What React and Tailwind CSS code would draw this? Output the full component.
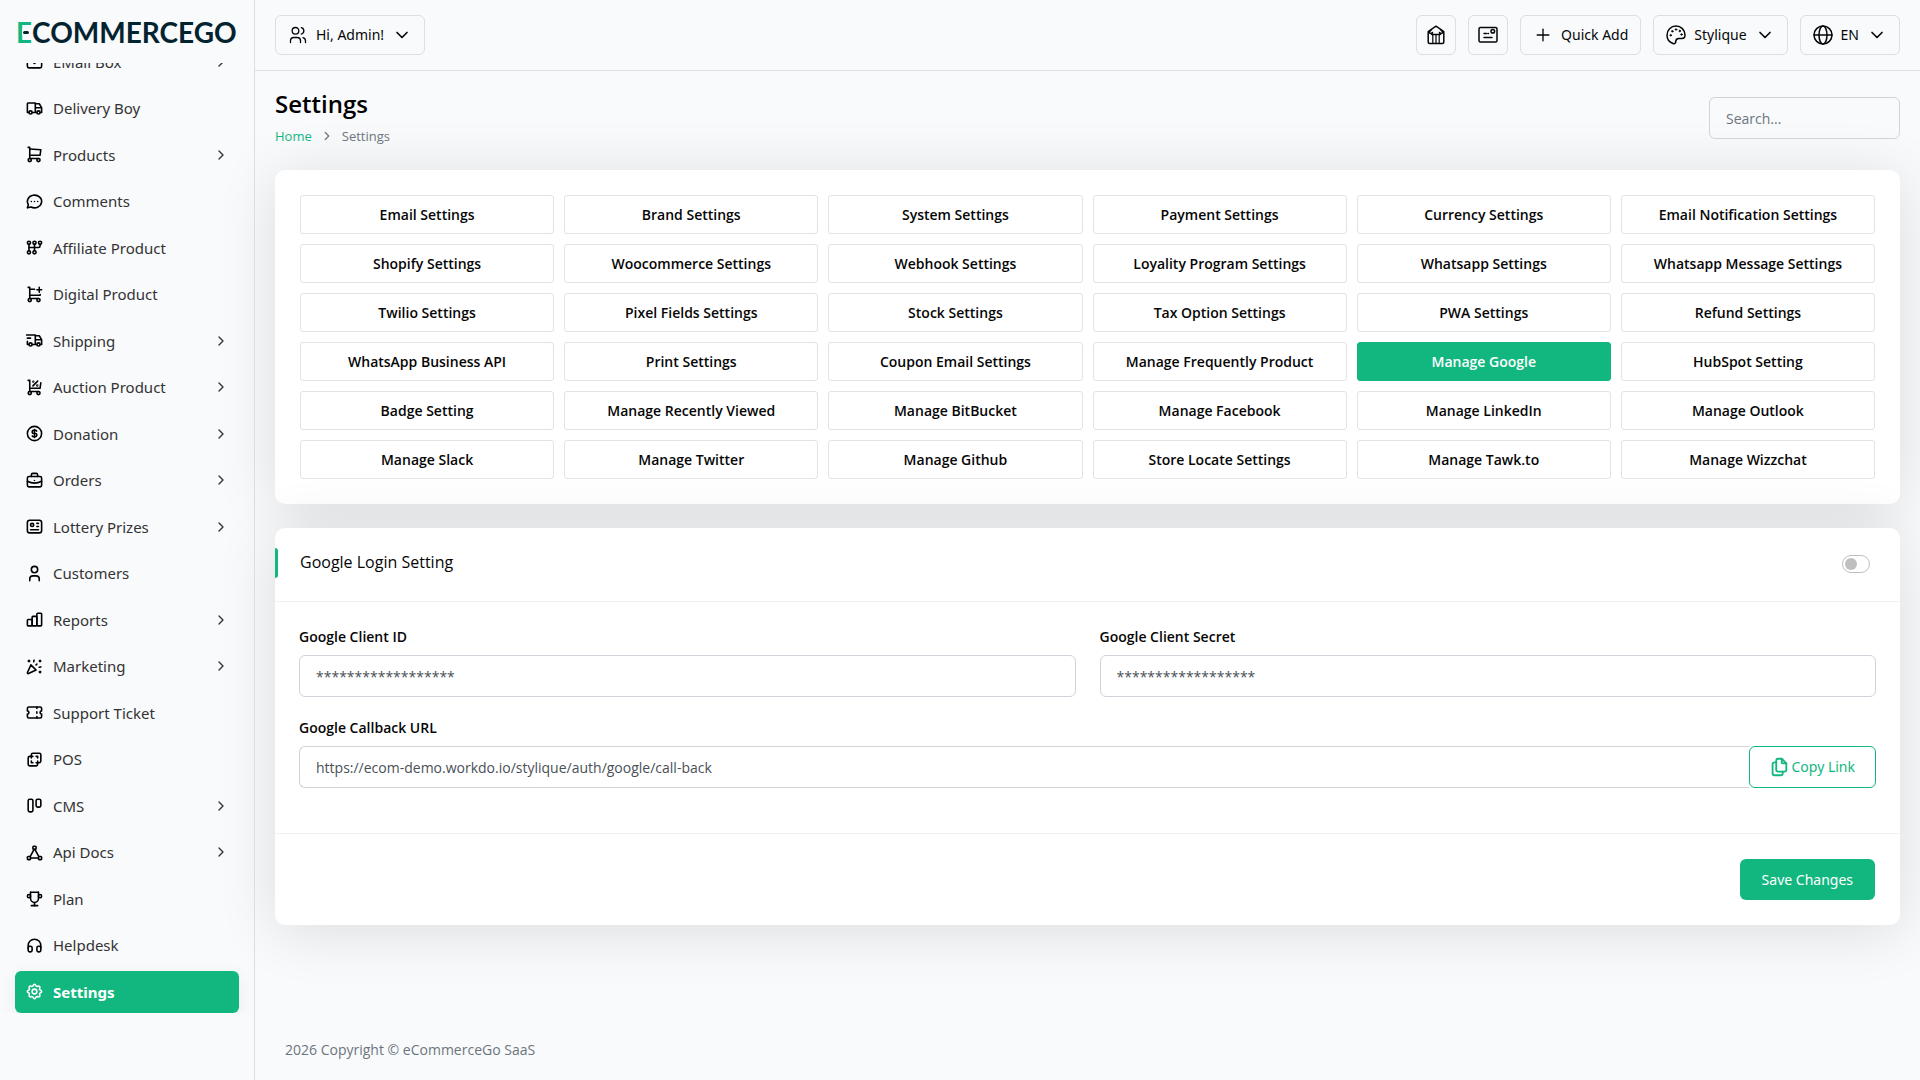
import { clsx } from 'clsx'
import {
  TbTruck,
  TbShoppingCart,
  TbManualGearbox,
  TbTruckDelivery,
  TbCoin,
  TbBriefcase,
  TbId,
  TbUser,
  TbConfetti,
  TbTicket,
  TbLayersDifference,
  TbVectorTriangle,
  TbTrophy,
  TbHeadphones,
  TbSettings,
  TbChevronRight,
  TbChevronDown,
  TbFiles,
  TbUsers,
  TbPlus
} from 'react-icons/tb'

/**
 * Line icon on a 24 unit grid, same look as the icon package
 */
const MenuGlyph = ({ children, size = 24, className }) => (
  <svg
    width={size}
    height={size}
    viewBox="0 0 24 24"
    fill="none"
    stroke="currentColor"
    strokeWidth="2"
    strokeLinecap="round"
    strokeLinejoin="round"
    aria-hidden="true"
    className={className}
  >
    {children}
  </svg>
)

const MailIcon = (props) => (
  <MenuGlyph {...props}>
    <rect x="3" y="5" width="18" height="15" rx="2" />
    <path d="M3 7l9 7.500L21 7" />
  </MenuGlyph>
)

const CommentIcon = (props) => (
  <MenuGlyph {...props}>
    <path d="M3 20l1.300-3.900a9 8 0 1 1 3.400 2.900L3 20M12 12v.010M8 12v.010M16 12v.010" />
  </MenuGlyph>
)

const CartPlusIcon = (props) => (
  <MenuGlyph {...props}>
    <circle cx="6" cy="19" r="2" />
    <circle cx="17" cy="19" r="2" />
    <path d="M17 17H6V3H4M6 5l6 .430M19.140 12l-.140 1H6M15 6h6M18 3v6" />
  </MenuGlyph>
)

const CartDiscountIcon = (props) => (
  <MenuGlyph {...props}>
    <circle cx="6" cy="19" r="2" />
    <circle cx="17" cy="19" r="2" />
    <path d="M17 17H6V3H4M20 6l-1 7H6M10 10l6-6" />
    <circle cx="10.500" cy="4.500" r=".5" />
    <circle cx="15.500" cy="9.500" r=".5" />
  </MenuGlyph>
)

const BarsIcon = (props) => (
  <MenuGlyph {...props}>
    <rect x="3" y="12" width="6" height="8" rx="1" />
    <rect x="9" y="8" width="6" height="12" rx="1" />
    <rect x="15" y="4" width="6" height="16" rx="1" />
  </MenuGlyph>
)

const BoardIcon = (props) => (
  <MenuGlyph {...props}>
    <rect x="4" y="4" width="6" height="16" rx="2" />
    <rect x="14" y="4" width="6" height="10" rx="2" />
  </MenuGlyph>
)

const menuItems = [
  { label: 'EMail Box', icon: MailIcon, hasChildren: true },
  { label: 'Delivery Boy', icon: TbTruck },
  { label: 'Products', icon: TbShoppingCart, hasChildren: true },
  { label: 'Comments', icon: CommentIcon },
  { label: 'Affiliate Product', icon: TbManualGearbox },
  { label: 'Digital Product', icon: CartPlusIcon },
  { label: 'Shipping', icon: TbTruckDelivery, hasChildren: true },
  { label: 'Auction Product', icon: CartDiscountIcon, hasChildren: true },
  { label: 'Donation', icon: TbCoin, hasChildren: true },
  { label: 'Orders', icon: TbBriefcase, hasChildren: true },
  { label: 'Lottery Prizes', icon: TbId, hasChildren: true },
  { label: 'Customers', icon: TbUser },
  { label: 'Reports', icon: BarsIcon, hasChildren: true },
  { label: 'Marketing', icon: TbConfetti, hasChildren: true },
  { label: 'Support Ticket', icon: TbTicket },
  { label: 'POS', icon: TbLayersDifference },
  { label: 'CMS', icon: BoardIcon, hasChildren: true },
  { label: 'Api Docs', icon: TbVectorTriangle, hasChildren: true },
  { label: 'Plan', icon: TbTrophy },
  { label: 'Helpdesk', icon: TbHeadphones },
  { label: 'Settings', icon: TbSettings, active: true }
]

const settingTabs = [
  'Email Settings', 'Brand Settings', 'System Settings', 'Payment Settings', 'Currency Settings', 'Email Notification Settings',
  'Shopify Settings', 'Woocommerce Settings', 'Webhook Settings', 'Loyality Program Settings', 'Whatsapp Settings', 'Whatsapp Message Settings',
  'Twilio Settings', 'Pixel Fields Settings', 'Stock Settings', 'Tax Option Settings', 'PWA Settings', 'Refund Settings',
  'WhatsApp Business API', 'Print Settings', 'Coupon Email Settings', 'Manage Frequently Product', 'Manage Google', 'HubSpot Setting',
  'Badge Setting', 'Manage Recently Viewed', 'Manage BitBucket', 'Manage Facebook', 'Manage LinkedIn', 'Manage Outlook',
  'Manage Slack', 'Manage Twitter', 'Manage Github', 'Store Locate Settings', 'Manage Tawk.to', 'Manage Wizzchat'
]

const Glyph = ({ children }) => (
  <svg
    width="20"
    height="20"
    viewBox="0 0 20 20"
    fill="none"
    stroke="currentColor"
    strokeWidth="1.5"
    strokeLinecap="round"
    strokeLinejoin="round"
    aria-hidden="true"
    className="shrink-0"
  >
    {children}
  </svg>
)

const StoreIcon = () => (
  <Glyph>
    <path d="M2.200 6.500 10 1.200l7.800 5.300V17a1.500 1.500 0 0 1-1.500 1.500H3.700A1.500 1.500 0 0 1 2.200 17V6.500Z" />
    <path d="M5.500 4.500 3.200 7c.3 1.600 2.300 2 3.300.5L5.800 9.500h8.400l-.7-2c1 1.500 3 1.100 3.300-.5l-2.300-2.500" />
    <path d="M6.800 9.500v9M10 9.500v9M13.200 9.500v9" strokeWidth="1.200" />
  </Glyph>
)

const CardIcon = () => (
  <Glyph>
    <rect x="1" y="2.500" width="18" height="14.500" rx="1.500" />
    <circle cx="14.800" cy="6.300" r="1.800" />
    <path d="M6 8.500h2.500M10 8.500h.5M6 12.500h8" />
  </Glyph>
)

const PaletteIcon = () => (
  <Glyph>
    <path d="M10 1a9 9 0 0 0-9 9.200c0 3.800 2.600 7 6 8.300 1.600.6 2.700-.3 2.700-1.700 0-2.400.8-3.300 3-3.300h3.300c2 0 3-1.300 3-3.500C19 5 15 1 10 1Z" />
    <g fill="currentColor" strokeWidth=".8">
      <circle cx="4.700" cy="10.300" r=".8" />
      <circle cx="6.300" cy="6.300" r=".8" />
      <circle cx="10" cy="4.500" r=".8" />
      <circle cx="13.700" cy="6" r=".8" />
      <circle cx="15.500" cy="9.500" r=".8" />
    </g>
  </Glyph>
)

const GlobeIcon = () => (
  <Glyph>
    <circle cx="10" cy="10" r="9" />
    <ellipse cx="10" cy="10" rx="4" ry="9" />
    <path d="M1 10h18" />
  </Glyph>
)

const Logo = () => (
  <a href="#" className="relative flex h-[63px] shrink-0 items-center px-4 font-['Lato',sans-serif] text-[28px] leading-10 font-bold text-[#03232f]">
    <span className="text-[#12b77f]">E</span>COMMERCEGO
    {/* detached middle stroke of the first letter */}
    <span className="absolute top-[29px] left-[22px] h-1.5 w-2.5 bg-[#f9fafc]" />
    <span className="absolute top-[31px] left-[23px] h-[3px] w-1.5 rounded-full bg-[#03232f]" />
  </a>
)

const Sidebar = () => (
  <aside className="sticky top-0 flex h-screen w-[255px] shrink-0 flex-col border-r border-[#dcdee1] font-['Noto_Sans',sans-serif]">
    <Logo />
    <nav className="mb-[67px] flex flex-1 flex-col justify-end gap-1 overflow-hidden px-[15px]">
      {menuItems.map(({ label, icon: Icon, hasChildren, active }) => (
        <a
          key={label}
          href="#"
          className={clsx(
            'flex shrink-0 items-center gap-[9px] rounded-md p-2.5 text-[15px] leading-normal',
            active ? 'bg-[#12b77f] font-bold text-white shadow-[0_5px_20px_rgba(0,0,0,0.06)]' : 'text-[#333333]'
          )}
        >
          <Icon size={19} className={active ? 'text-white' : 'text-black'} />
          <span className="flex-1">{label}</span>
          {hasChildren && <TbChevronRight size={16} />}
        </a>
      ))}
    </nav>
  </aside>
)

const HeaderButton = ({ children, className, ...props }) => (
  <button
    type="button"
    className={clsx('flex h-10 items-center rounded-md border border-[#dcdee1] text-sm text-[#060606]', className)}
    {...props}
  >
    {children}
  </button>
)

const Header = () => (
  <header className="flex h-[71px] items-center justify-between border-b border-[#dcdee1] px-5 font-['Noto_Sans',sans-serif]">
    <HeaderButton className="gap-2 px-3">
      <TbUsers size={20} strokeWidth={1.6} />
      Hi, Admin!
      <TbChevronDown size={20} />
    </HeaderButton>
    <div className="flex gap-3">
      <HeaderButton className="w-10 justify-center" aria-label="Store">
        <StoreIcon />
      </HeaderButton>
      <HeaderButton className="w-10 justify-center" aria-label="Messages">
        <CardIcon />
      </HeaderButton>
      <HeaderButton className="gap-2 px-3">
        <TbPlus size={20} strokeWidth={1.6} />
        Quick Add
      </HeaderButton>
      <HeaderButton className="gap-2 px-3">
        <PaletteIcon />
        Stylique
        <TbChevronDown size={20} />
      </HeaderButton>
      <HeaderButton className="gap-2 px-3">
        <GlobeIcon />
        EN
        <TbChevronDown size={20} />
      </HeaderButton>
    </div>
  </header>
)

const Card = ({ children, className }) => (
  <section className={clsx('rounded-[10px] bg-white shadow-[0_6px_60px_rgba(0,0,0,0.12)]', className)}>
    {children}
  </section>
)

const inputStyle = 'h-[42px] w-full rounded-md border border-[#ced4da] bg-transparent px-4 text-sm text-[#495057] placeholder:text-[#6c757d]'

const Field = ({ id, label, value, children }) => (
  <div>
    <label htmlFor={id} className="mb-2 block text-sm leading-5 font-semibold text-[#060606]">
      {label}
    </label>
    <div className="flex">
      <input id={id} type="text" defaultValue={value} className={clsx(inputStyle, children && 'rounded-r-none border-r-0')} />
      {children}
    </div>
  </div>
)

const App = () => {
  return (
    <div className="flex min-h-screen bg-[#f9fafc] font-['Open_Sans',sans-serif] text-sm">
      <Sidebar />
      <div className="flex min-w-0 flex-1 flex-col">
        <Header />

        <main className="flex-1 px-5 pt-[15px]">
          {/* Page title */}
          <div className="mb-6 flex items-end justify-between">
            <div>
              <h1 className="text-2xl leading-9 font-semibold text-black">Settings</h1>
              <div className="mt-1 flex items-center gap-2 text-[13px] leading-5">
                <a href="#" className="text-[#12b77f]">Home</a>
                <TbChevronRight size={14} className="text-[#6c757d]" />
                <span className="text-[#6c757d]">Settings</span>
              </div>
            </div>
            <input type="search" aria-label="Search" placeholder="Search..." className={clsx(inputStyle, 'mb-[7px] max-w-[191px]')} />
          </div>

          {/* Setting tabs */}
          <Card className="mb-6 grid grid-cols-6 gap-2.5 p-[25px]">
            {settingTabs.map((tab) => (
              <a
                key={tab}
                href="#"
                className={clsx(
                  'flex h-[39px] items-center justify-center rounded-[3px] border text-sm font-semibold',
                  tab === 'Manage Google' ? 'border-[#12b77f] bg-[#12b77f] text-white' : 'border-[#e2e3e5] text-[#060606]'
                )}
              >
                {tab}
              </a>
            ))}
          </Card>

          {/* Google login form */}
          <Card>
            <div className="flex items-start border-b border-[#f1f1f1] pt-5 pr-[30px] pb-[23px]">
              <span className="h-[30px] w-[3px] rounded-r-sm bg-[#12b77f]" />
              <h2 className="flex-1 pl-[22px] text-base leading-7 text-[#060606]">Google Login Setting</h2>
              <input
                type="checkbox"
                role="switch"
                aria-label="Google Login Setting"
                className="mt-[7px] h-[18px] w-7 appearance-none rounded-full border border-[#bfbfbf] p-0.5 before:block before:size-3 before:rounded-full before:bg-[#bfbfbf] checked:border-[#12b77f]"
              />
            </div>
            <div className="grid grid-cols-2 gap-x-6 gap-y-[21px] px-6 pt-[25px] pb-[45px]">
              <Field id="client-id" label="Google Client ID" value="******************" />
              <Field id="client-secret" label="Google Client Secret" value="******************" />
              <div className="col-span-2">
                <Field id="callback-url" label="Google Callback URL" value="https://ecom-demo.workdo.io/stylique/auth/google/call-back">
                  <button type="button" className="flex shrink-0 items-center gap-px rounded-md border border-[#12b77f] pr-5 pl-[18px] font-['Noto_Sans',sans-serif] text-sm text-[#12b77f]">
                    <TbFiles size={22} />
                    Copy Link
                  </button>
                </Field>
              </div>
            </div>
            <div className="flex justify-end border-t border-[#f1f1f1] p-[25px]">
              <button type="button" className="h-[41px] rounded-md bg-[#12b77f] px-[22px] font-['Noto_Sans',sans-serif] text-sm text-white">
                Save Changes
              </button>
            </div>
          </Card>
        </main>

        <footer className="px-[30px] py-5 leading-5 text-[#6c757d]">2026 Copyright © eCommerceGo SaaS</footer>
      </div>
    </div>
  )
}

export default App
